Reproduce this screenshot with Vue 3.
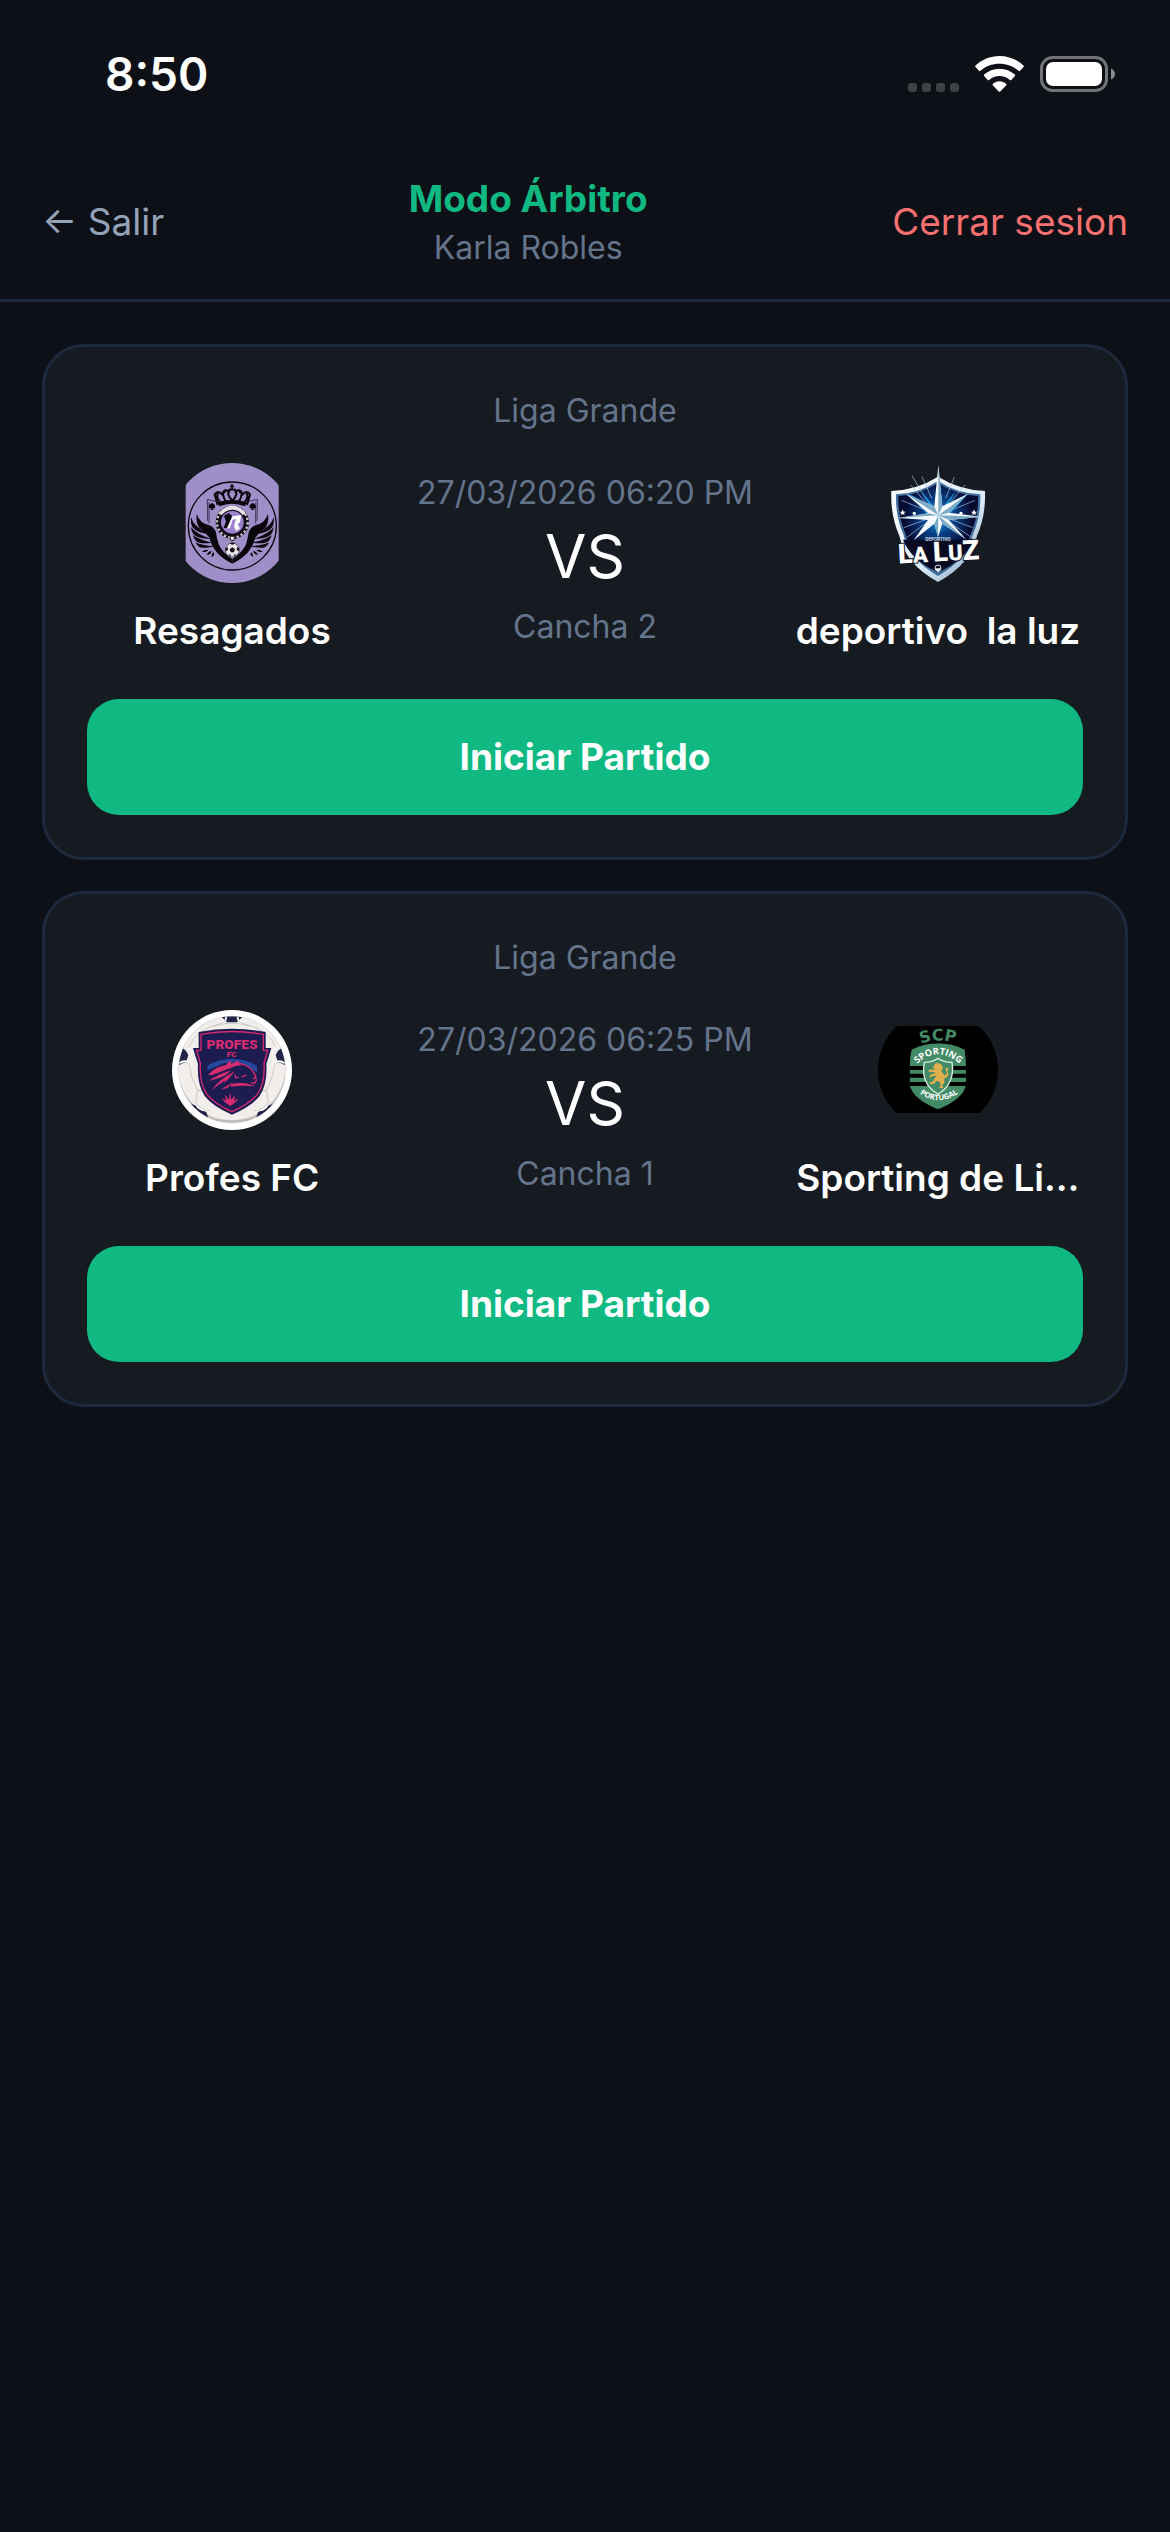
<template>
  <div class="screen">

    <!-- Status bar -->
    <div class="status-bar">
      <span class="status-time">8:50</span>
      <div class="status-icons">
        <svg class="icon-signal" viewBox="0 0 51 36" aria-hidden="true">
          <rect v-for="i in 4" :key="i" :x="(i - 1) * 14" y="27" width="9" height="9" rx="3" fill="#3f4146" />
        </svg>
        <svg class="icon-wifi" viewBox="0 0 49 36" fill="#fff" aria-hidden="true">
          <path d="M24.5 0C15.200 0 6.800 3.600 0.500 9.500Q-0.200 10.300 0.500 11L4 14.800Q4.700 15.500 5.500 14.800C10.500 10.300 17.200 7.700 24.500 7.700S38.500 10.300 43.500 14.800Q44.300 15.500 45 14.800L48.500 11Q49.200 10.300 48.500 9.500C42.200 3.600 33.800 0 24.500 0Z" />
          <path d="M24.500 12.700C18.600 12.700 13.200 14.900 9.100 18.600Q8.400 19.300 9.100 20L12.700 23.900Q13.400 24.600 14.200 23.900C17 21.500 20.600 20.100 24.500 20.100S32 21.500 34.800 23.900Q35.600 24.600 36.300 23.900L39.900 20Q40.600 19.300 39.900 18.600C35.800 14.900 30.400 12.700 24.500 12.700Z" />
          <path d="M24.500 25.300C22 25.300 19.700 26.200 17.900 27.700Q17.100 28.400 17.800 29.200L23.700 35.500Q24.500 36.200 25.300 35.500L31.200 29.200Q31.900 28.400 31.100 27.700C29.300 26.200 27 25.300 24.500 25.300Z" />
        </svg>
        <svg class="icon-battery" viewBox="0 0 76 36" aria-hidden="true">
          <rect x="1.500" y="1.500" width="65" height="33" rx="11" fill="none" stroke="#717377" stroke-width="3" />
          <rect x="6" y="6" width="56" height="24" rx="7" fill="#fff" />
          <path d="M71 12.500Q75 14.500 75 18T71 23.500Z" fill="#8a8b8e" />
        </svg>
      </div>
    </div>

    <!-- Header -->
    <header class="header">
      <button class="header-btn" type="button">← Salir</button>
      <div class="header-center">
        <h1 class="header-title">Modo Árbitro</h1>
        <p class="header-sub">{{ referee }}</p>
      </div>
      <button class="header-btn danger" type="button">Cerrar sesion</button>
    </header>

    <!-- Matches -->
    <main class="matches">
      <article v-for="m in matches" :key="m.id" class="card">
        <p class="muted league">{{ m.league }}</p>
        <div class="row">
          <div v-for="side in ['home', 'away']" :key="side" class="team" :class="side">

            <!-- Purple winged crest -->
            <svg v-if="m[side].logo === 'resagados'" class="logo" viewBox="34 54 360 360" aria-hidden="true">
              <clipPath id="clip-resagados"><rect x="75" y="54" width="279" height="360" /></clipPath>
              <g clip-path="url(#clip-resagados)">
                <circle cx="214" cy="234" r="180" fill="#9f8fc9" />
                <circle cx="215" cy="243" r="132" fill="none" stroke="#0a0710" stroke-width="4" />
                <path d="M145 172V235M285 172V235M140 163Q160 172 180 166M290 163Q270 172 250 166M140 163L141 228M290 163L289 228" fill="none" stroke="#40345a" stroke-width="3" />
                <g v-for="t in mirrored" :key="t" :transform="t">
                  <path d="M108 207Q118 236 145 240Q160 246 166 262Q168 280 174 298Q184 322 215 342V356Q188 342 172 326Q152 304 146 278Q132 258 116 248Q105 235 108 207Z" fill="#08060c" />
                  <path d="M91 216Q98 246 147 268Q108 264 95 246Q89 234 91 216ZM91 246Q104 266 150 281Q110 282 98 267Q92 258 91 246ZM97 270Q112 283 154 293Q118 299 106 288Q99 281 97 270ZM105 292Q122 301 160 304Q130 312 116 306Q108 301 105 292Z" fill="#08060c" />
                  <path d="M124 320Q134 312 143 315Q136 324 124 320ZM138 329Q144 318 153 318Q151 330 138 329ZM153 336Q152 325 159 322Q164 331 153 336Z" fill="#08060c" />
                  <path d="M154 174C140 180 143 193 153 190L150 195H159L156 190C166 192 167 180 154 174Z" fill="#08060c" />
                  <path d="M214 170Q188 167 170 177L162 148Q172 134 184 148Q190 130 203 139Q208 130 214 136M177 171Q164 150 174 145M194 168Q180 140 195 141M214 166Q195 144 208 139" fill="none" stroke="#08060c" stroke-width="6" />
                </g>
                <path d="M214 118V133M208 124H220" stroke="#08060c" stroke-width="5" />
                <path d="M171 172Q214 158 258 172L253 184Q214 169 176 184Z" fill="#08060c" />
                <circle cx="215" cy="232" r="50" fill="#100d16" />
                <circle cx="215" cy="232" r="46" fill="none" stroke="#c4c0cb" stroke-width="7" stroke-dasharray="7 6" />
                <path d="M174 204Q214 160 256 204L246 211Q214 184 184 211Z" fill="#e5e2e9" />
                <circle cx="215" cy="232" r="36" fill="#9d81cf" stroke="#15101e" stroke-width="4" />
                <path d="M190 212L204 204L214 212L210 224L200 248L188 250L196 230Z" fill="#09070e" />
                <path d="M216 214L242 210L238 232L231 237L238 251L226 258L220 244L226 222L216 224L207 250L199 250Z" fill="#fff" />
                <rect x="209" y="274" width="12" height="12" rx="3" fill="#eee" stroke="#111" stroke-width="3" />
                <circle cx="215" cy="315" r="21" fill="#e9e6ec" stroke="#292330" stroke-width="2" />
                <path d="M215 307L223 313L220 322H210L207 313ZM207 296L215 299L223 296L215 292ZM194 310L201 306L202 315L196 319ZM236 310L229 306L228 315L234 319ZM203 329L209 328L211 335ZM227 329L221 328L219 335Z" fill="#17131c" />
              </g>
            </svg>

            <!-- Blue shield with star -->
            <svg v-else-if="m[side].logo === 'luz'" class="logo" viewBox="43 54 360 360" aria-hidden="true">
              <defs>
                <radialGradient id="luz-glow" cx="50%" cy="38%" r="50%">
                  <stop offset="0" stop-color="#1c9ae4" />
                  <stop offset="0.400" stop-color="#073f86" />
                  <stop offset="0.850" stop-color="#050a30" />
                </radialGradient>
                <linearGradient id="luz-edge" x2="1" y2="1">
                  <stop offset="0" stop-color="#fff" />
                  <stop offset="0.600" stop-color="#dcecf7" />
                  <stop offset="1" stop-color="#7396b6" />
                </linearGradient>
              </defs>
              <path d="M83 138Q162 134 223 95Q286 134 364 138Q367 212 340 272Q323 356 223 411Q124 356 107 272Q80 212 83 138Z" fill="url(#luz-edge)" />
              <path d="M97 148Q165 146 223 108Q282 146 350 148Q352 212 328 268Q312 342 223 393Q135 342 119 268Q95 212 97 148Z" fill="#416f9d" />
              <path d="M104 153Q168 150 223 115Q279 150 343 153Q345 212 321 268Q305 335 223 382Q142 335 126 268Q102 212 104 153Z" fill="url(#luz-glow)" />
              <path d="M118 284H330Q305 345 223 382Q142 345 118 284Z" fill="#070a20" />
              <path d="M145 92L188 164M175 95L204 160M272 96L246 160M304 120L263 168M142 121L186 172M113 166L180 193M334 166L270 193M120 248L186 224M130 277L194 229M327 248L264 224M320 275L257 231" stroke="#a9cbe2" stroke-width="2" />
              <path d="M134 144L207 189L191 207ZM315 144L245 188L259 207ZM172 137L210 184L202 190ZM277 137L240 184L248 190Z" fill="#1d94dc" />
              <path d="M224 60L236 184L313 146L256 203L353 215L256 225L306 282L236 236L223 276L212 236L150 286L193 225L103 219L194 205L126 146L212 184Z" fill="#f6fbff" />
              <path d="M224 60L236 184L224 211ZM313 146L256 203L224 211ZM353 215L256 225L224 211ZM306 282L236 236L224 211ZM223 276L212 236L224 211ZM103 219L194 205L224 211ZM126 146L212 184L224 211Z" fill="#7cabc7" />
              <path d="M117 193L120 200H127L121 204L123 211L117 207L111 211L113 204L107 200H114ZM331 193L334 200H341L335 204L337 211L331 207L325 211L327 204L321 200H328Z" fill="#fff" />
              <circle cx="152" cy="205" r="5" fill="#fff" />
              <circle cx="292" cy="205" r="5" fill="#fff" />
              <text class="luz-small" x="223" y="289" text-anchor="middle">DEPORTIVO</text>
              <text class="luz-name" x="103" y="349" transform="rotate(-3 223 330)"><tspan class="luz-cap">L</tspan>A <tspan class="luz-cap">L</tspan>U<tspan class="luz-cap">Z</tspan></text>
              <circle cx="223" cy="369" r="9" fill="#0a0d1b" stroke="#dfe8ef" stroke-width="3" />
              <path d="M214 370H232L223 383Z" fill="#edf3f7" />
            </svg>

            <!-- Ball badge with horse shield -->
            <svg v-else-if="m[side].logo === 'profes'" class="logo" viewBox="39 45 360 360" aria-hidden="true">
              <clipPath id="clip-ball"><circle cx="219" cy="224" r="160" /></clipPath>
              <circle cx="219" cy="225" r="180" fill="#fff" />
              <circle cx="219" cy="224" r="161" fill="#c8c3bf" />
              <g clip-path="url(#clip-ball)">
                <circle cx="218" cy="215" r="161" fill="#f1eeec" />
                <path d="M180 58Q219 69 258 58L234 82H204ZM70 158Q82 165 88 180L82 200L56 212ZM368 158Q356 165 350 180L356 200L382 212ZM75 318Q118 332 142 352L155 390L108 372ZM364 318Q320 332 297 352L284 390L331 372Z" fill="#202448" />
                <path d="M201 62Q203 84 183 86M236 62Q235 84 255 86M61 205Q75 194 88 202M377 205Q363 194 350 202M113 333Q130 350 146 344M325 333Q309 350 291 344" fill="none" stroke="#fff" stroke-width="6" />
                <path d="M201 62Q203 84 183 86Q110 104 90 155M236 62Q235 84 255 86Q329 104 349 155M62 208Q79 195 91 211Q95 250 116 286M376 208Q360 195 347 211Q342 250 322 286M116 286L110 323Q128 346 152 347M322 286L328 323Q310 346 286 347M116 286L137 287M322 286L301 287M142 369Q219 385 296 369M166 93Q219 76 272 93" fill="none" stroke="#b9b5b4" stroke-width="2" />
              </g>
              <path d="M119 111Q219 92 320 111V159H337Q328 189 322 207Q326 265 302 303Q276 335 219 359Q162 335 137 303Q113 265 117 207Q111 189 102 159H119Z" fill="#1c1c50" />
              <path d="M126 118Q219 101 313 118V166H326L315 205Q319 263 295 298Q269 329 219 350Q170 329 144 298Q120 263 124 205L113 166H126Z" fill="none" stroke="#d72b70" stroke-width="4" />
              <path d="M145 212Q219 171 294 212V231L265 216L233 202L197 204L145 226Z" fill="#25479c" />
              <path d="M232 198L243 206Q266 210 280 226Q291 240 292 257L286 266L277 262L269 256Q252 264 238 258Q228 250 229 238Q212 262 190 280L176 262Q190 234 214 212Z" fill="#1c1c50" />
              <path d="M232 198L243 206Q266 210 280 226Q291 240 292 257L286 266L277 262M229 238Q226 254 240 246M248 244Q256 246 262 239M281 252L287 248" fill="none" stroke="#d72b70" stroke-width="4" />
              <path d="M147 239Q172 214 200 211L214 196L217 206L233 199L248 212Q228 210 214 220Q196 225 178 233L160 240ZM150 258Q172 240 216 226Q202 243 180 249ZM159 285Q176 256 228 228Q210 252 194 266L199 256L174 273Z" fill="#d72b70" />
              <path d="M186 284L220 262L207 278ZM216 267Q258 259 287 274Q247 270 216 275Z" fill="#d72b70" />
              <path d="M213 333Q194 322 189 309L202 318L197 299L210 314L213 290L217 314L229 299L225 318L238 309Q233 323 213 333Z" fill="#d72b70" />
              <text class="profes-name" x="219" y="163" text-anchor="middle">PROFES</text>
              <text class="profes-fc" x="218" y="185" text-anchor="middle">FC</text>
            </svg>

            <!-- Green striped crest on black -->
            <svg v-else class="logo" viewBox="39 45 360 360" aria-hidden="true">
              <defs>
                <clipPath id="clip-scp"><rect x="39" y="93" width="360" height="261" /></clipPath>
                <clipPath id="clip-crest"><path d="M140 164Q219 126 299 164Q302 190 303 213V270Q295 312 219 343Q143 312 134 270V213Q134 190 140 164Z" /></clipPath>
                <path id="arc-scp" d="M152 153Q219 122 287 149" />
                <path id="arc-sporting" d="M155 208Q219 148 285 208" />
                <path id="arc-portugal" d="M160 293Q219 338 284 293" />
              </defs>
              <circle cx="219" cy="225" r="180" fill="#000" clip-path="url(#clip-scp)" />
              <g clip-path="url(#clip-crest)">
                <rect x="130" y="140" width="180" height="210" fill="#438a66" />
                <path d="M130 219H310M130 242H310M130 267H310" stroke="#000" stroke-width="12" />
              </g>
              <path d="M178 202Q202 202 219 190Q236 202 261 202Q271 267 219 297Q166 267 178 202Z" fill="#438a66" stroke="#d8eee1" stroke-width="4" />
              <path d="M207 207L218 203L230 209L234 219L229 228L239 242L246 234L241 223L246 216L250 221L247 229L251 239L243 249L236 251L239 261L232 270L235 279L221 280L227 273L225 260L214 258L208 266L195 267L194 261L203 260L209 250L214 242L204 243L196 248L194 241L204 236L213 234L201 230L193 232L190 226L198 223L210 225L206 219L202 216L209 212Z" fill="#e0ae4b" />
              <text class="scp-top"><textPath href="#arc-scp" startOffset="50%" text-anchor="middle">SCP</textPath></text>
              <text class="scp-mid"><textPath href="#arc-sporting" startOffset="50%" text-anchor="middle">SPORTING</textPath></text>
              <text class="scp-low"><textPath href="#arc-portugal" startOffset="50%" text-anchor="middle">PORTUGAL</textPath></text>
            </svg>

            <span class="team-name">{{ m[side].name }}</span>
          </div>

          <div class="info">
            <p class="muted">{{ m.date }}</p>
            <p class="vs">VS</p>
            <p class="muted field">{{ m.field }}</p>
          </div>
        </div>
        <button class="start-btn" type="button">Iniciar Partido</button>
      </article>
    </main>

  </div>
</template>

<script setup>
import { ref } from 'vue'

const referee = ref('Karla Robles')

const matches = ref([
  {
    id: 1,
    league: 'Liga Grande',
    date: '27/03/2026 06:20 PM',
    field: 'Cancha 2',
    home: { name: 'Resagados', logo: 'resagados' },
    away: { name: 'deportivo  la luz', logo: 'luz' },
  },
  {
    id: 2,
    league: 'Liga Grande',
    date: '27/03/2026 06:25 PM',
    field: 'Cancha 1',
    home: { name: 'Profes FC', logo: 'profes' },
    away: { name: 'Sporting de Li…', logo: 'scp' },
  },
])

// left half of the winged crest, then the same half flipped
const mirrored = ['translate(0 0)', 'translate(430 0) scale(-1 1)']
</script>

<style>
body {
  background: #0d1017;
}
</style>

<style scoped>
.screen {
  min-height: 100vh;
  background: #0d1017;
  color: #fff;
  font-family: Inter, 'Liberation Sans', sans-serif;
}
p, h1 {
  margin: 0;
}
button {
  border: none;
  font-family: inherit;
  cursor: pointer;
}

/* ── Status bar ── */
.status-bar {
  height: 141px;
  box-sizing: border-box;
  padding: 6px 54px 0 105px;
  display: flex;
  align-items: center;
  justify-content: space-between;
}
.status-time {
  font-size: 46px;
  font-weight: 600;
  line-height: 56px;
}
.status-icons {
  display: flex;
  gap: 16px;
}
.icon-signal {
  width: 51px;
  height: 36px;
}
.icon-wifi {
  width: 49px;
  height: 36px;
}
.icon-battery {
  width: 76px;
  height: 36px;
}

/* ── Header ── */
.header {
  display: flex;
  align-items: center;
  justify-content: space-between;
  padding: 34px 42px 30px;
  border-bottom: 3px solid #1e293b;
}
.header-btn {
  padding: 0;
  background: none;
  color: #94a3b8;
  font-size: 37px;
  line-height: 48px;
}
.header-btn.danger {
  color: #f87171;
}
.header-center {
  display: flex;
  flex-direction: column;
  gap: 4px;
  text-align: center;
}
.header-title {
  color: #10b981;
  font-size: 37px;
  font-weight: 700;
  line-height: 48px;
}
.header-sub {
  color: #64748b;
  font-size: 32px;
  line-height: 42px;
}

/* ── Cards ── */
.matches {
  display: flex;
  flex-direction: column;
  gap: 31px;
  padding: 42px;
}
.card {
  padding: 42px;
  background: #161b22;
  border: 3px solid #1e293b;
  border-radius: 42px;
}
.muted {
  color: #64748b;
  font-size: 32px;
  line-height: 44px;
}
.league {
  text-align: center;
  margin-bottom: 30px;
}
.row {
  display: grid;
  grid-template-columns: minmax(0, 1fr) auto minmax(0, 1fr);
  align-items: center;
  margin-bottom: 44px;
}
.team {
  grid-row: 1;
  display: flex;
  flex-direction: column;
  align-items: center;
  gap: 24px;
}
.team.home {
  grid-column: 1;
}
.team.away {
  grid-column: 3;
}
.logo {
  width: 120px;
  height: 120px;
}
.team-name {
  max-width: 100%;
  overflow: hidden;
  white-space: pre;
  text-overflow: ellipsis;
  font-size: 37px;
  font-weight: 600;
  line-height: 48px;
}
.info {
  grid-column: 2;
  grid-row: 1;
  padding: 2px 40px 0;
  text-align: center;
}
.vs {
  font-size: 60px;
  line-height: 82px;
}
.field {
  margin-top: 8px;
}
.start-btn {
  display: block;
  width: 100%;
  padding: 34px;
  background: #10b981;
  border-radius: 32px;
  color: #fff;
  font-size: 37px;
  font-weight: 700;
  line-height: 48px;
}

/* ── Crest lettering ── */
.luz-small {
  fill: #dbe8f2;
  font: 700 13px Inter, sans-serif;
}
.luz-name {
  fill: #fff;
  stroke: #0b1028;
  stroke-width: 6px;
  paint-order: stroke;
  font: 900 66px Roboto, sans-serif;
}
.luz-cap {
  font-size: 82px;
}
.profes-name {
  fill: #d72b70;
  font: 900 41px Roboto, sans-serif;
}
.profes-fc {
  fill: #d72b70;
  font: 900 24px Roboto, sans-serif;
}
.scp-top {
  fill: #438a66;
  font: 700 48px 'DejaVu Sans', sans-serif;
}
.scp-mid {
  fill: #fff;
  font: 700 28px 'Open Sans', sans-serif;
}
.scp-low {
  fill: #fff;
  font: 700 23px 'Open Sans', sans-serif;
}
</style>
